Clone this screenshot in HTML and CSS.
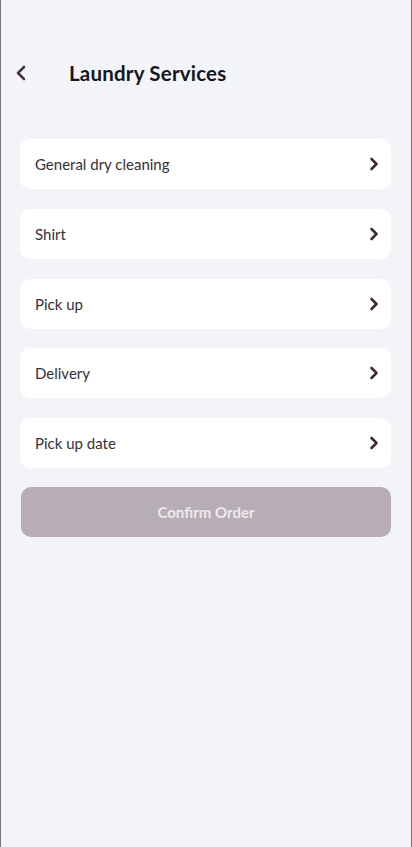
FILE: index.html
```html
<!DOCTYPE html>
<html lang="en">
<head>
<meta charset="utf-8">
<meta name="viewport" content="width=device-width, initial-scale=1">
<title>Laundry Services</title>
<link rel="stylesheet" href="styles.css">
</head>
<body>
<div class="screen">
  <header class="topbar">
    <button class="back" aria-label="Back">
      <svg width="12" height="16" viewBox="0 0 12 16"><path d="M9 2 L3 8 L9 14" fill="none" stroke="#4a3441" stroke-width="2.6" stroke-linecap="round" stroke-linejoin="round"/></svg>
    </button>
    <h1 class="title">Laundry Services</h1>
  </header>
  <main class="list">
    <div class="item"><span>General dry cleaning</span><svg class="chev" width="10" height="14" viewBox="0 0 10 14"><path d="M2.5 2 L7.5 7 L2.5 12" fill="none" stroke="#3f2c38" stroke-width="2.6" stroke-linecap="round" stroke-linejoin="round"/></svg></div>
    <div class="item"><span>Shirt</span><svg class="chev" width="10" height="14" viewBox="0 0 10 14"><path d="M2.5 2 L7.5 7 L2.5 12" fill="none" stroke="#3f2c38" stroke-width="2.6" stroke-linecap="round" stroke-linejoin="round"/></svg></div>
    <div class="item"><span>Pick up</span><svg class="chev" width="10" height="14" viewBox="0 0 10 14"><path d="M2.5 2 L7.5 7 L2.5 12" fill="none" stroke="#3f2c38" stroke-width="2.6" stroke-linecap="round" stroke-linejoin="round"/></svg></div>
    <div class="item"><span>Delivery</span><svg class="chev" width="10" height="14" viewBox="0 0 10 14"><path d="M2.5 2 L7.5 7 L2.5 12" fill="none" stroke="#3f2c38" stroke-width="2.6" stroke-linecap="round" stroke-linejoin="round"/></svg></div>
    <div class="item"><span>Pick up date</span><svg class="chev" width="10" height="14" viewBox="0 0 10 14"><path d="M2.5 2 L7.5 7 L2.5 12" fill="none" stroke="#3f2c38" stroke-width="2.6" stroke-linecap="round" stroke-linejoin="round"/></svg></div>
    <button class="confirm">Confirm Order</button>
  </main>
</div>
</body>
</html>
```
FILE: styles.css
```css
* { box-sizing: border-box; }
html, body { margin: 0; padding: 0; }
body {
  background: #f3f4f8;
  font-family: Lato, "Noto Sans", sans-serif;
}
.screen {
  width: 412px;
  height: 847px;
  padding-top: 56px;
  background: #f3f4f8;
  border-left: 1px solid #767676;
  border-right: 1px solid #767676;
  overflow: hidden;
}
.topbar {
  display: flex;
  align-items: center;
  height: 34px;
  padding-left: 13px;
}
.back {
  border: 0;
  background: none;
  padding: 0;
  width: 14px;
  height: 16px;
  display: flex;
  align-items: center;
  justify-content: center;
}
.title {
  margin: 0 0 0 41px;
  font-size: 20.5px;
  font-weight: 700;
  color: #16161e;
  letter-spacing: 0.2px;
}
.list {
  display: flex;
  flex-direction: column;
  gap: 19.75px;
  padding: 49px 20px 0 19px;
}
.item {
  height: 50px;
  background: #ffffff;
  border-radius: 10px;
  display: flex;
  align-items: center;
  justify-content: space-between;
  padding: 0 12px 0 15px;
  font-size: 15px;
  color: #33303a;
}
.chev { display: block; }
.confirm {
  height: 50px;
  margin: -1px 0 0 1px;
  border: 0;
  border-radius: 10px;
  background: #b6aeb4;
  color: #ede9ec;
  font-family: Lato, "Noto Sans", sans-serif;
  font-size: 15px;
  font-weight: 700;
}
```
